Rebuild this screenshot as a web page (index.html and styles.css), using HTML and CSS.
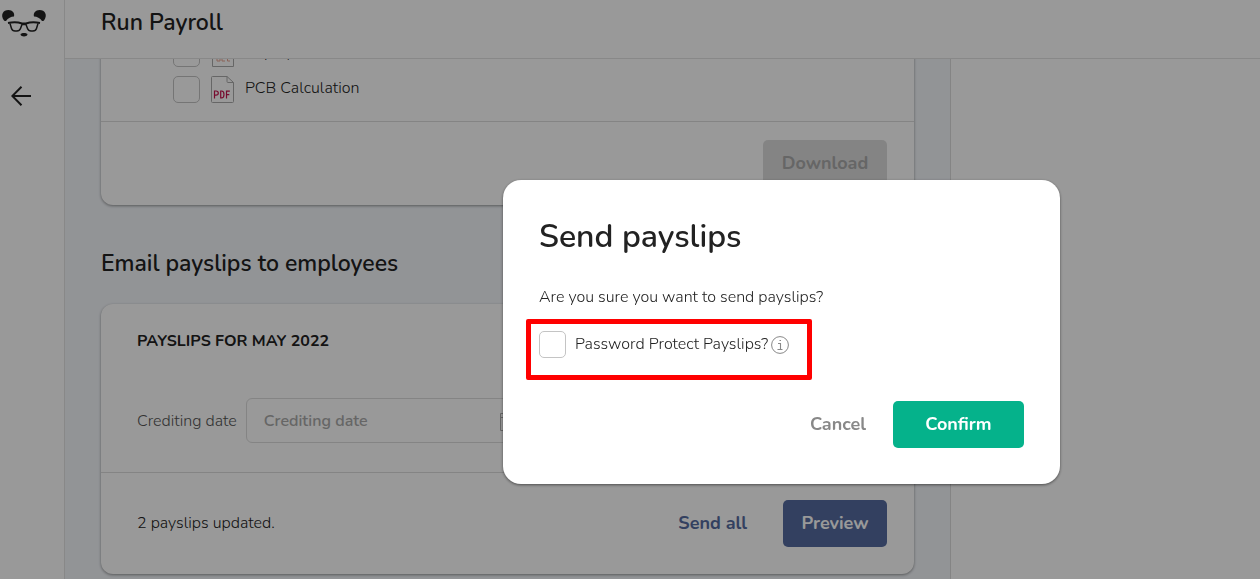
FILE: index.html
```html
<!DOCTYPE html>
<html lang="en">

<head>
    <meta charset="UTF-8">
    <meta name="viewport" content="width=device-width, initial-scale=1.0">
    <title>Run Payroll</title>
    <link rel="stylesheet" href="styles.css">
</head>

<body>
    <div class="app">
        <nav class="sidebar">
            <a href="#" class="logo" aria-label="Home">
                <svg width="48" height="40" viewBox="0 0 48 40">
                    <path d="M4 20.500C0 15 3 10 8.500 10c4 0 6.500 3 5.500 6.500-3 0-6 1.500-8 4.500-1 0-1.500 0-2-.5z" fill="#222"/>
                    <path d="M44 20.500c4-5.500 1-10.500-4.500-10.500-4 0-6.500 3-5.500 6.500 3 0 6 1.500 8 4.500 1 0 1.500 0 2-.5z" fill="#222"/>
                    <path d="M8 23q8-1.500 14 .5h4q6-2 14-.5" fill="none" stroke="#222" stroke-width="2"/>
                    <path d="M10 23.500l1.500 5q.8 2.500 3.500 2.500h2q2.500 0 3.500-2.500l1.500-4h4l1.500 4q1 2.500 3.500 2.500h2q2.700 0 3.500-2.500l1.500-5" fill="none" stroke="#222" stroke-width="1.500"/>
                    <path d="M20.500 34.500c0-2 7-2 7 0 0 1-2 2-3.500 2s-3.500-1-3.500-2z" fill="#222"/>
                </svg>
            </a>
            <a href="#" class="back" aria-label="Back">
                <svg width="20" height="20" viewBox="0 0 20 20" fill="none" stroke="#222" stroke-width="2">
                    <path d="M20 10H2M10.500 .8L1.300 10l9.200 9.200"/>
                </svg>
            </a>
        </nav>

        <div class="page">
            <header class="topbar">
                <h1>Run Payroll</h1>
            </header>

            <div class="columns">
                <main class="content">
                    <section class="card files-card">
                        <div class="file-list">
                            <label class="file-row">
                                <input type="checkbox" class="checkbox">
                                <svg class="file-icon" width="23" height="27" viewBox="0 0 23 27" fill="none">
                                    <path d="M1.500.5H16l6.500 6v20h-21zM16 .5v6h6.500" stroke="#aaa"/>
                                    <path d="M6 14v7h3v-3H6M11 14v7h3M19 14h-2.500v7H19" stroke="#e8a493"/>
                                </svg>
                                <span>Payslips</span>
                            </label>
                            <label class="file-row">
                                <input type="checkbox" class="checkbox">
                                <svg class="file-icon" width="23" height="27" viewBox="0 0 23 27" fill="none">
                                    <path d="M1.500.5H16l6.500 6v19q0 1-1 1h-20q-1 0-1-1v-24q0-1 1-1zM16 .5v5q0 1 1 1h5.500" stroke="#aaa"/>
                                    <path d="M3.500 22.500v-7.500h1.500q2.300 0 2.300 2.100T5 19.200H3.500M9.700 15v6.900h.8q2.500 0 2.500-3.400T10.500 15zM15.500 22.500v-7.400h3.300M15.500 18.700h2.800" stroke="#c8144f" stroke-width="1.200"/>
                                </svg>
                                <span>PCB Calculation</span>
                            </label>
                        </div>
                        <div class="card-footer files-footer">
                            <button type="button" class="btn btn-disabled" disabled>Download</button>
                        </div>
                    </section>

                    <h2>Email payslips to employees</h2>

                    <section class="card">
                        <div class="card-body">
                            <h3>PAYSLIPS FOR MAY 2022</h3>
                            <div class="date-row">
                                <label for="creditingDate">Crediting date</label>
                                <div class="date-field">
                                    <input type="text" id="creditingDate" placeholder="Crediting date">
                                    <svg width="20" height="21" viewBox="0 0 20 21" fill="none" stroke="#aaa">
                                        <path d="M.5 3.500h19v17H.5zM.5 7.500h19M5.500 0v4M14.500 0v4"/>
                                    </svg>
                                </div>
                            </div>
                        </div>
                        <div class="card-footer">
                            <span class="status">2 payslips updated.</span>
                            <button type="button" class="btn btn-link">Send all</button>
                            <button type="button" class="btn btn-primary">Preview</button>
                        </div>
                    </section>
                </main>
                <aside class="side-panel"></aside>
            </div>
        </div>
    </div>

    <div class="overlay">
        <div class="modal" role="dialog" aria-labelledby="modalTitle">
            <h2 id="modalTitle" class="modal-title">Send payslips</h2>
            <p>Are you sure you want to send payslips?</p>
            <div class="protect-option">
                <input type="checkbox" id="protect" class="checkbox">
                <label for="protect">Password Protect Payslips?</label>
                <svg width="18" height="18" viewBox="0 0 18 18" fill="none" stroke="#888">
                    <circle cx="9" cy="9" r="8.400"/>
                    <path d="M7 7.500h2.500v6M6.500 13.500h5M8.500 4.500h1.500" stroke-width="1.100"/>
                </svg>
            </div>
            <div class="modal-actions">
                <button type="button" class="btn btn-cancel">Cancel</button>
                <button type="button" class="btn btn-confirm">Confirm</button>
            </div>
        </div>
    </div>
</body>

</html>
```

FILE: styles.css
```css
* {
    box-sizing: border-box;
}

body {
    margin: 0;
    font-family: Nunito, Lato, sans-serif;
    font-size: 16px;
    font-weight: 300;
    line-height: 24px;
    color: #222;
}

h1, h2, h3, p {
    margin: 0;
}

.app {
    display: flex;
    height: 100vh;
    overflow: hidden;
}

/* sidebar */
.sidebar {
    display: flex;
    flex-direction: column;
    flex: 0 0 65px;
    border-right: 1px solid #e3e3e3;
}

.logo, .back {
    display: block;
}

.logo svg, .back svg {
    display: block;
}

.back {
    padding: 46px 0 0 11px;
}

/* header */
.page {
    display: flex;
    flex-direction: column;
    flex: 1;
    min-width: 0;
}

.topbar {
    flex: 0 0 59px;
    padding: 7px 36px;
    border-bottom: 1px solid #e3e3e3;
}

.topbar h1 {
    font-size: 23px;
    line-height: 32px;
    font-weight: 600;
}

.columns {
    display: flex;
    flex: 1;
    min-height: 0;
}

.content {
    flex: 1;
    padding: 0 36px;
    background-color: #f4f7fb;
    overflow: hidden;
}

.content h2 {
    padding: 43px 0 24px;
    font-size: 23px;
    line-height: 32px;
    font-weight: 600;
}

.side-panel {
    flex: 0 0 310px;
    border-left: 1px solid #ddd;
}

/* cards */
.card {
    background-color: #fff;
    border-radius: 12px;
    box-shadow: 0 1px 3px rgba(0, 0, 0, 0.4);
}

/* list is scrolled down past its first rows */
.files-card {
    margin-top: -37px;
}

.file-list {
    display: flex;
    flex-direction: column;
    gap: 9px;
    padding: 18px 72px;
}

.file-row {
    display: flex;
    align-items: center;
    height: 27px;
}

.file-row span {
    padding-bottom: 4px;
}

.file-icon {
    margin: 0 11px;
}

.checkbox {
    appearance: none;
    flex: none;
    width: 27px;
    height: 27px;
    margin: 0;
    border: 1px solid #c4c4c4;
    border-radius: 5px;
    background-color: #fff;
}

.card-body {
    padding: 25px 36px 29px;
}

.card-body h3 {
    font-size: 16px;
    font-weight: 700;
}

.date-row {
    display: flex;
    align-items: center;
    gap: 9px;
    margin-top: 45px;
    color: #555;
}

.date-field {
    display: flex;
    align-items: center;
    width: 292px;
    height: 45px;
    padding: 0 17px;
    border: 1px solid #ddd;
    border-radius: 6px;
}

.date-field input {
    flex: 1;
    min-width: 0;
    padding: 0;
    border: 0;
    outline: 0;
    font: inherit;
    font-weight: 600;
}

.date-field input::placeholder {
    color: #aaa;
}

.card-footer {
    display: flex;
    align-items: center;
    padding: 27px 27px 27px 36px;
    border-top: 1px solid #ddd;
}

.files-footer {
    justify-content: flex-end;
    padding: 18px 27px;
}

.status {
    flex: 1;
    padding-bottom: 2px;
}

/* buttons */
.btn {
    height: 47px;
    padding: 0 18px 2px;
    border: 0;
    border-radius: 5px;
    background-color: transparent;
    font-family: inherit;
    font-size: 18px;
    font-weight: 700;
    cursor: pointer;
}

.btn-disabled {
    min-width: 124px;
    background-color: #ddd;
    color: #aaa;
    cursor: default;
}

.btn-link {
    margin-right: 18px;
    color: #556ba0;
}

.btn-primary {
    min-width: 104px;
    background-color: #556ba0;
    color: #fff;
}

/* modal */
.overlay {
    position: fixed;
    inset: 0;
    display: flex;
    align-items: flex-start;
    justify-content: flex-end;
    padding: 180px 200px 0 0;
    background-color: rgba(0, 0, 0, 0.4);
}

.modal {
    width: 557px;
    padding: 36px;
    border-radius: 18px;
    background-color: #fff;
    box-shadow: 0 1px 3px rgba(0, 0, 0, 0.5);
}

.modal-title {
    padding-top: 1px;
    font-size: 32px;
    line-height: 40px;
    font-weight: 600;
}

.modal p {
    margin-top: 28px;
}

.protect-option {
    display: flex;
    align-items: center;
    width: 286px;
    height: 61px;
    margin: 10px 0 21px -13px;
    padding: 0 8px 10px;
    border: 5px solid #f00;
    border-radius: 2px;
}

.protect-option label {
    margin: 0 3px 0 9px;
    padding-bottom: 2px;
}

.modal-actions {
    display: flex;
    justify-content: flex-end;
    gap: 9px;
}

.btn-cancel {
    color: #888;
}

.btn-confirm {
    min-width: 131px;
    background-color: #05b28b;
    color: #fff;
}
```
